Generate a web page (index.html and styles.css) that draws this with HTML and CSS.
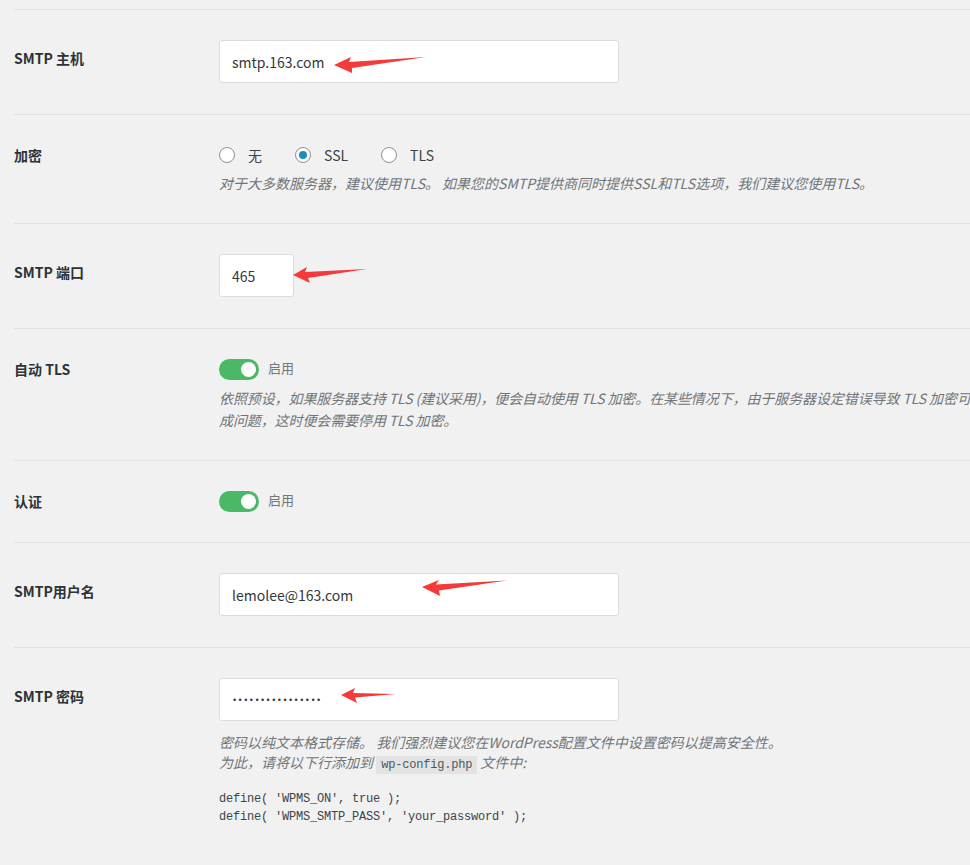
FILE: index.html
```html
<!DOCTYPE html>
<html lang="zh-CN">
<head>
<meta charset="utf-8">
<title>SMTP 设置</title>
<link rel="stylesheet" href="styles.css">
</head>
<body>
<div class="settings">

  <div class="row row--input">
    <div class="label">SMTP 主机</div>
    <div class="field">
      <input class="text" type="text" value="smtp.163.com">
      <svg class="arrow arrow--host" width="92" height="18" viewBox="0 0 92 18"><polygon points="0,9 17,1 15,6 92,1 18,12 18,17"/></svg>
    </div>
  </div>

  <div class="row">
    <div class="label">加密</div>
    <div class="field">
      <div class="radios">
        <span class="radio-opt"><span class="radio"></span>无</span>
        <span class="radio-opt"><span class="radio radio--on"></span>SSL</span>
        <span class="radio-opt"><span class="radio"></span>TLS</span>
      </div>
      <p class="desc">对于大多数服务器，建议使用TLS。 如果您的SMTP提供商同时提供SSL和TLS选项，我们建议您使用TLS。</p>
    </div>
  </div>

  <div class="row row--input">
    <div class="label">SMTP 端口</div>
    <div class="field">
      <input class="text text--short" type="text" value="465">
      <svg class="arrow arrow--port" width="75" height="18" viewBox="0 0 75 18"><polygon points="0,9 14,1 12,6 74,3 15,12 17,17"/></svg>
    </div>
  </div>

  <div class="row row--tls">
    <div class="label">自动 TLS</div>
    <div class="field">
      <div class="switch"><span class="track"><span class="knob"></span></span><span class="switch-label">启用</span></div>
      <p class="desc desc--wide">依照预设，如果服务器支持 TLS (建议采用)，便会自动使用 TLS 加密。在某些情况下，由于服务器设定错误导致 TLS 加密可能会造<br>成问题，这时便会需要停用 TLS 加密。</p>
    </div>
  </div>

  <div class="row">
    <div class="label">认证</div>
    <div class="field">
      <div class="switch"><span class="track"><span class="knob"></span></span><span class="switch-label">启用</span></div>
    </div>
  </div>

  <div class="row row--input">
    <div class="label">SMTP用户名</div>
    <div class="field">
      <input class="text" type="text" value="lemolee@163.com">
      <svg class="arrow arrow--user" width="85" height="18" viewBox="0 0 85 18"><polygon points="0,8 17,1 14,5.5 85,1.5 17,11.5 18,17"/></svg>
    </div>
  </div>

  <div class="row row--input">
    <div class="label">SMTP 密码</div>
    <div class="field">
      <div class="text text--pw"><span class="dots">••••••••••••••••</span></div>
      <svg class="arrow arrow--pw" width="55" height="17" viewBox="0 0 55 17"><polygon points="0,8 14,1 12,6 55,7 14,10.5 16,16"/></svg>
      <p class="desc desc--pw">密码以纯文本格式存储。 我们强烈建议您在WordPress配置文件中设置密码以提高安全性。<br>为此，请将以下行添加到 <code>wp-config.php</code> 文件中:</p>
      <pre class="code-block">define( 'WPMS_ON', true );
define( 'WPMS_SMTP_PASS', 'your_password' );</pre>
    </div>
  </div>

</div>
</body>
</html>
```
FILE: styles.css
```css
html, body {
  margin: 0;
  overflow: hidden;
  background: #f1f1f1;
}
body {
  font-family: "Noto Sans CJK SC", "Noto Sans", sans-serif;
  font-size: 14px;
  color: #3c434a;
}
.settings {
  padding: 9px 0 0 14px;
}
.row {
  display: flex;
  border-top: 1px solid #e1e1e1;
  padding: 30px 0;
}
.row--input {
  padding-bottom: 31px;
}
.row--tls {
  padding-bottom: 29px;
}
.label {
  flex: none;
  width: 205px;
  font-weight: 600;
  color: #2c3338;
  line-height: 20px;
}
.row--input .label {
  padding-top: 8px;
}
.field {
  flex: 1;
  min-width: 0;
  position: relative;
}
.text {
  box-sizing: border-box;
  display: block;
  width: 400px;
  height: 43px;
  margin: 0;
  padding: 0 12px;
  border: 1px solid #dcdcde;
  border-radius: 3px;
  background: #fff;
  font-family: "Noto Sans CJK SC", "Noto Sans", sans-serif;
  font-size: 14px;
  color: #32373c;
  outline: none;
}
.text--short {
  width: 75px;
}
.text--pw {
  display: flex;
  align-items: center;
  padding-left: 13px;
}
.dots {
  font-family: "Liberation Sans", sans-serif;
  font-size: 9px;
  letter-spacing: 2.45px;
  color: #32373c;
}
.arrow {
  position: absolute;
  fill: #f43a3a;
}
.arrow--host { left: 115px; top: 16px; }
.arrow--port { left: 74px; top: 12px; }
.arrow--user { left: 203px; top: 6px; }
.arrow--pw { left: 122px; top: 9px; }

.radios {
  display: flex;
  align-items: center;
  height: 20px;
  color: #3c434a;
}
.radio-opt {
  display: flex;
  align-items: center;
  margin-right: 33px;
}
.radio {
  box-sizing: border-box;
  width: 16px;
  height: 16px;
  margin-right: 13px;
  border: 1px solid #8c8f94;
  border-radius: 50%;
  background: #fff;
  display: flex;
  align-items: center;
  justify-content: center;
}
.radio--on::after {
  content: "";
  width: 8px;
  height: 8px;
  border-radius: 50%;
  background: #1e8cbe;
}
.desc {
  margin: 8px 0 0;
  font-style: italic;
  font-size: 14px;
  line-height: 20px;
  color: #707579;
}
.desc--wide {
  white-space: nowrap;
  line-height: 22px;
  margin-top: 7px;
  letter-spacing: -0.1px;
}
.desc--pw {
  margin-top: 11px;
}
.desc code {
  font-family: "Liberation Mono", monospace;
  font-style: normal;
  font-size: 12px;
  letter-spacing: -0.2px;
  background: #e3e3e3;
  color: #50575e;
  padding: 2px 5px;
}
.switch {
  display: flex;
  align-items: center;
  height: 21px;
}
.track {
  box-sizing: border-box;
  width: 40px;
  height: 21px;
  padding: 0 3px;
  border-radius: 11px;
  background: #4ab866;
  display: flex;
  align-items: center;
  justify-content: flex-end;
}
.knob {
  width: 15px;
  height: 15px;
  border-radius: 50%;
  background: #fff;
}
.switch-label {
  margin-left: 9px;
  font-size: 13px;
  color: #72777c;
  line-height: 20px;
  margin-top: -3px;
}
.code-block {
  margin: 15px 0 0;
  font-family: "Liberation Mono", monospace;
  font-size: 12px;
  letter-spacing: -0.2px;
  line-height: 18px;
  color: #3c434a;
}
```
